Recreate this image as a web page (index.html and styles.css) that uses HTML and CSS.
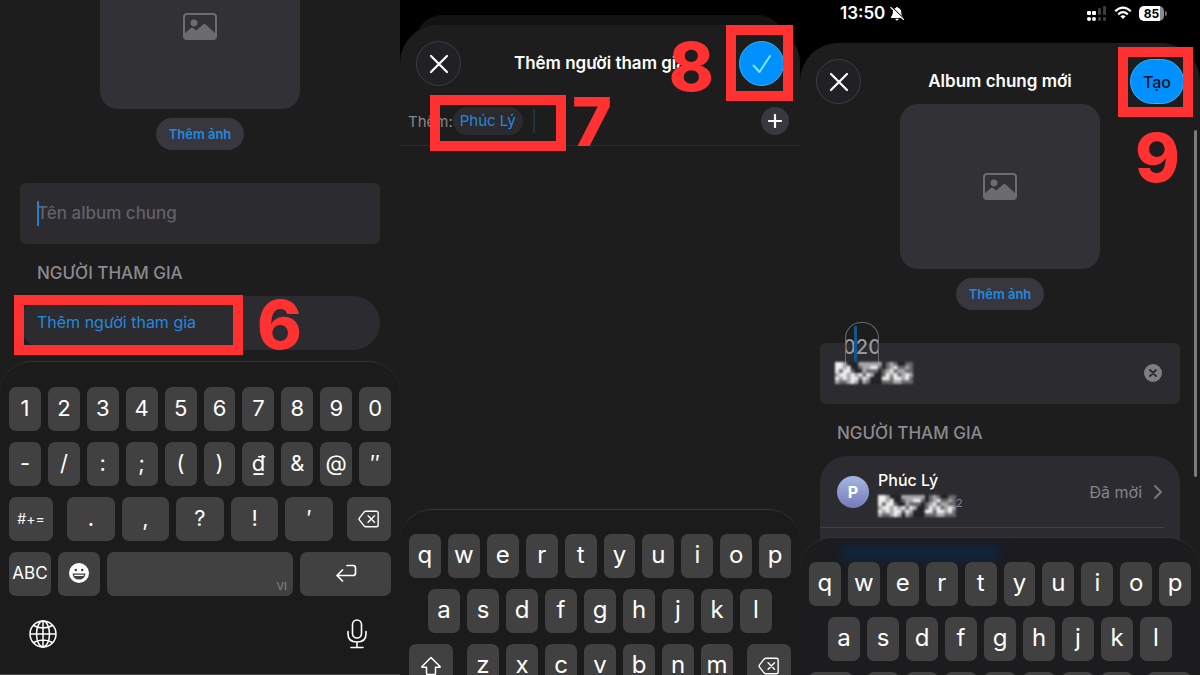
FILE: index.html
```html
<!DOCTYPE html>
<html lang="vi">

<head>
    <meta charset="UTF-8">
    <meta name="viewport" content="width=device-width, initial-scale=1.0">
    <title>Album chung mới</title>
    <link rel="stylesheet" href="styles.css">
</head>

<body>
    <!-- Shared icons -->
    <svg class="symbols" aria-hidden="true">
        <symbol id="icon-photo" viewBox="0 0 34 28">
            <rect x="1" y="1" width="32" height="25" rx="3" fill="none" stroke="currentColor" stroke-width="2" />
            <circle cx="11" cy="10" r="3.4" fill="currentColor" />
            <path d="M2 20l6-5q1-.8 2 0l3 2.6 7-6q1.300-1 2.600 0L32 20v4q0 2-2 2H4q-2 0-2-2z" fill="currentColor" />
        </symbol>
        <symbol id="icon-close" viewBox="0 0 20 20">
            <path d="M2 2l16 16M18 2L2 18" fill="none" stroke="currentColor" stroke-width="2.200" stroke-linecap="round" />
        </symbol>
        <symbol id="icon-delete" viewBox="0 0 24 20">
            <path d="M8.500 1.500H20q2 0 2 2v13q0 2-2 2H8.500q-1 0-1.700-.8L1.500 11q-.8-1 0-2l5.300-6.700q.7-.8 1.700-.8zM11 6.500l7 7M18 6.500l-7 7" fill="none" stroke="currentColor" stroke-width="1.500" stroke-linecap="round" stroke-linejoin="round" />
        </symbol>
        <symbol id="icon-shift" viewBox="0 0 22 20">
            <path d="M11 1.500L2 10.500q-.6.800.3.800H6.500V17q0 1.500 1.500 1.500h6q1.500 0 1.500-1.500v-5.700h4.200q.9 0 .3-.8z" fill="none" stroke="currentColor" stroke-width="1.500" stroke-linejoin="round" />
        </symbol>
        <!-- Pixelated number -->
        <symbol id="mosaic" viewBox="0 0 20 6" preserveAspectRatio="none">
            <rect width="20" height="6" fill="#68686b" />
            <g stroke-width="1" fill="none">
                <path stroke="#232325" d="M3 .5h3m6 0h1m3 0h2M4 1.500h2m6 0h1M5 2.500h2m4 0h1M10 3.500h2M9 4.500h3M6 5.500h1m2 0h3" />
                <path stroke="#a9a9ab" d="M2 .5h1m3 0h6m2 0h1M2 1.500h1m4 0h2m5 0h1m3 0h1M7 2.500h1m5 0h1m2 0h2M0 3.500h1m2 0h1m1 0h1m3 0h1m4 0h1m2 0h1m1 0h1M1 4.500h1m1 0h1m4 0h1m8 0h1M0 5.500h1m2 0h1m1 0h1m1 0h1m7 0h2" />
                <path stroke="#efefef" d="M0 .5h2M0 1.500h2m1 0h1m5 0h2m4 0h1M0 2.500h1m1 0h2m10 0h1M1 3.500h2m1 0h1m1 0h1m1 0h1m4 0h1m1 0h1m2 0h1M0 4.500h1m1 0h1m1 0h2m1 0h1m4 0h2m1 0h2m1 0h1M4 5.500h1" />
            </g>
        </symbol>
    </svg>

    <div class="steps">
        <!-- Step 6 -->
        <section class="screen screen-name">
            <div class="content">
                <div class="photo photo-cut"><svg class="photo-icon"><use href="#icon-photo" /></svg></div>
                <button class="pill">Thêm ảnh</button>
                <div class="field">
                    <input class="field-input" type="text" aria-label="Tên album chung" placeholder="Tên album chung">
                    <span class="caret"></span>
                </div>
                <h2 class="group-title">NGƯỜI THAM GIA</h2>
                <button class="add-row">Thêm người tham gia</button>
            </div>
            <div class="keyboard keyboard-full">
                <div class="keys digits">
                    <button>1</button><button>2</button><button>3</button><button>4</button><button>5</button><button>6</button><button>7</button><button>8</button><button>9</button><button>0</button>
                </div>
                <div class="keys digits">
                    <button>-</button><button>/</button><button>:</button><button>;</button><button>(</button><button>)</button><button>₫</button><button>&amp;</button><button>@</button><button>″</button>
                </div>
                <div class="keys digits">
                    <button class="side small">#+=</button><button>.</button><button>,</button><button>?</button><button>!</button><button>′</button>
                    <button class="side side-end" aria-label="Xóa"><svg class="key-icon"><use href="#icon-delete" /></svg></button>
                </div>
                <div class="keys keys-bottom">
                    <button class="abc">ABC</button>
                    <button aria-label="Emoji">
                        <svg class="emoji" viewBox="0 0 20 20">
                            <circle cx="10" cy="10" r="10" fill="#fff" />
                            <circle cx="6.800" cy="7" r="1.300" fill="#414141" />
                            <circle cx="13.200" cy="7" r="1.300" fill="#414141" />
                            <path d="M3.500 10.500h13q-.6 6-6.500 6t-6.500-6z" fill="#414141" />
                            <path d="M5 11.700h10q0 1.400-1 1.400H6q-1 0-1-1.400z" fill="#fff" />
                        </svg>
                    </button>
                    <button class="space">VI</button>
                    <button aria-label="Xuống dòng">
                        <svg class="return" viewBox="0 0 22 18">
                            <path d="M12 1.500h6q2.500 0 2.500 2.500v5q0 2.500-2.500 2.500H2M7.500 6L2 11.500 7.500 17" fill="none" stroke="#fff" stroke-width="1.700" stroke-linecap="round" stroke-linejoin="round" />
                        </svg>
                    </button>
                </div>
                <div class="keyboard-tools">
                    <button aria-label="Ngôn ngữ">
                        <svg class="globe" viewBox="0 0 28 28" fill="none" stroke="#fff" stroke-width="1.500">
                            <circle cx="14" cy="14" r="13" />
                            <ellipse cx="14" cy="14" rx="6.500" ry="13" />
                            <path d="M14 1v26M1 14h26M4.500 5.500q9.500 5 19 0M4.500 22.500q9.500-5 19 0" />
                        </svg>
                    </button>
                    <button aria-label="Đọc chính tả">
                        <svg class="mic" viewBox="0 0 20 30" fill="none" stroke="#fff" stroke-width="1.600" stroke-linecap="round">
                            <rect x="5.500" y="1" width="9" height="18" rx="4.500" />
                            <path d="M1 12.500v2.500q0 8 9 8t9-8v-2.500M10 23v5.500M4 28.500h12" />
                        </svg>
                    </button>
                </div>
            </div>
            <div class="mark mark-6"></div>
            <span class="step step-6">6</span>
        </section>

        <!-- Steps 7 and 8 -->
        <section class="screen screen-people">
            <div class="sheet">
                <header class="bar">
                    <button class="round" aria-label="Đóng"><svg class="close-icon"><use href="#icon-close" /></svg></button>
                    <h1>Thêm người tham gia</h1>
                    <button class="round done" aria-label="Xong">
                        <svg class="check" viewBox="0 0 20 20">
                            <path d="M1.500 11.500L7.500 18 18 2" fill="none" stroke="#7fe4ff" stroke-width="2" stroke-linecap="round" stroke-linejoin="round" />
                        </svg>
                    </button>
                </header>
                <div class="recipients">
                    <span>Thêm:</span>
                    <a class="chip" href="#">Phúc Lý</a>
                    <span class="caret-dim"></span>
                    <button class="plus" aria-label="Thêm liên hệ">
                        <svg viewBox="0 0 14 14"><path d="M7 1v12M1 7h12" stroke="#fff" stroke-width="2.200" stroke-linecap="round" /></svg>
                    </button>
                </div>
            </div>
            <div class="keyboard keyboard-people">
                <div class="keys">
                    <button>q</button><button>w</button><button>e</button><button>r</button><button>t</button><button>y</button><button>u</button><button>i</button><button>o</button><button>p</button>
                </div>
                <div class="keys keys-inset">
                    <button>a</button><button>s</button><button>d</button><button>f</button><button>g</button><button>h</button><button>j</button><button>k</button><button>l</button>
                </div>
                <div class="keys">
                    <button class="side" aria-label="Shift"><svg class="key-icon"><use href="#icon-shift" /></svg></button>
                    <button>z</button><button>x</button><button>c</button><button>v</button><button>b</button><button>n</button><button>m</button>
                    <button class="side side-end" aria-label="Xóa"><svg class="key-icon"><use href="#icon-delete" /></svg></button>
                </div>
            </div>
            <div class="mark mark-7"></div>
            <span class="step step-7">7</span>
            <div class="mark mark-8"></div>
            <span class="step step-8">8</span>
        </section>

        <!-- Step 9 -->
        <section class="screen screen-create">
            <div class="status">
                <span class="clock">13:50</span>
                <svg class="bell" viewBox="0 0 14 15">
                    <path d="M7 1q1 0 1.200 1 3 .8 3 4.500 0 2.500 1.800 4.500v1H1v-1q1.800-2 1.800-4.500 0-3.700 3-4.500Q6 1 7 1zM5.300 12.800h3.400Q8.500 14.500 7 14.500t-1.700-1.700z" fill="#fff" />
                    <path d="M1.500.9l12 11.200" stroke="#000" stroke-width="1.200" />
                    <path d="M.8 1.500l12.700 12" stroke="#fff" stroke-width="1.100" stroke-linecap="round" />
                </svg>
                <svg class="signal" viewBox="0 0 20 15">
                    <g fill="#fff">
                        <rect x="0" y="5" width="4" height="4" rx="1" /><rect x="5" y="5" width="4" height="4" rx="1" />
                        <rect x="0" y="11" width="4" height="4" rx="2" /><rect x="5" y="11" width="4" height="4" rx="2" />
                    </g>
                    <g fill="#3d3d3d">
                        <rect x="11" y="2" width="3" height="7" rx="1" /><rect x="16" y="0" width="3" height="9" rx="1" />
                        <rect x="11" y="11" width="3" height="4" rx="1" /><rect x="16" y="11" width="3" height="4" rx="1" />
                    </g>
                </svg>
                <svg class="wifi" viewBox="0 0 18 14">
                    <path d="M1.200 5.200Q9-1.900 16.800 5.200M4.200 8.300q4.800-4.200 9.600 0" fill="none" stroke="#fff" stroke-width="2.200" />
                    <path d="M6.300 10.300q2.700-2.200 5.400 0L9 13z" fill="#fff" />
                </svg>
                <span class="battery">85</span>
            </div>
            <div class="sheet sheet-create">
                <header class="bar">
                    <button class="round" aria-label="Đóng"><svg class="close-icon"><use href="#icon-close" /></svg></button>
                    <h1>Album chung mới</h1>
                    <button class="round create">Tạo</button>
                </header>
                <div class="content">
                    <div class="photo"><svg class="photo-icon"><use href="#icon-photo" /></svg></div>
                    <button class="pill">Thêm ảnh</button>
                    <div class="field">
                        <input class="field-input" type="text" aria-label="Tên album chung">
                        <svg class="clear" viewBox="0 0 18 18">
                            <circle cx="9" cy="9" r="9" fill="#7e7e83" />
                            <path d="M6 6l6 6M12 6l-6 6" stroke="#2c2b30" stroke-width="1.800" stroke-linecap="round" />
                        </svg>
                        <span class="loupe">020</span>
                        <svg class="mosaic field-mosaic"><use href="#mosaic" /></svg>
                    </div>
                    <h2 class="group-title">NGƯỜI THAM GIA</h2>
                    <div class="people">
                        <div class="person">
                            <span class="avatar">P</span>
                            <div class="person-name">
                                <strong>Phúc Lý</strong>
                                <span class="number"><svg class="mosaic"><use href="#mosaic" /></svg><small>2</small></span>
                            </div>
                            <span class="invited">Đã mời</span>
                            <svg class="chevron" viewBox="0 0 8 14"><path d="M1 1l6 6-6 6" fill="none" stroke="#77777c" stroke-width="2" stroke-linecap="round" stroke-linejoin="round" /></svg>
                        </div>
                    </div>
                </div>
            </div>
            <div class="keyboard keyboard-create">
                <div class="keys">
                    <button>q</button><button>w</button><button>e</button><button>r</button><button>t</button><button>y</button><button>u</button><button>i</button><button>o</button><button>p</button>
                </div>
                <div class="keys keys-inset">
                    <button>a</button><button>s</button><button>d</button><button>f</button><button>g</button><button>h</button><button>j</button><button>k</button><button>l</button>
                </div>
                <div class="keys">
                    <button class="side" aria-label="Shift"></button>
                    <button aria-label="z"></button><button aria-label="x"></button><button aria-label="c"></button><button aria-label="v"></button><button aria-label="b"></button><button aria-label="n"></button><button aria-label="m"></button>
                    <button class="side side-end" aria-label="Xóa"></button>
                </div>
            </div>
            <div class="scrollbar"></div>
            <div class="mark mark-9"></div>
            <span class="step step-9">9</span>
        </section>
    </div>
</body>

</html>
```

FILE: styles.css
```css
* {
    box-sizing: border-box;
}

body {
    margin: 0;
    background: #000;
    color: #fff;
    font-family: Inter, "Liberation Sans", sans-serif;
    font-size: 16px;
}

button {
    border: 0;
    padding: 0;
    background: none;
    color: inherit;
    font: inherit;
    cursor: pointer;
}

svg {
    display: block;
    flex: none;
}

h1,
h2 {
    margin: 0;
}

.symbols {
    display: none;
}

.steps {
    display: grid;
    grid-template-columns: repeat(3, 1fr);
    height: 100vh;
}

.screen {
    position: relative;
    display: flex;
    flex-direction: column;
    min-width: 0;
    overflow: hidden;
}

.screen-name {
    background: #1d1d1d;
    border-bottom: 1px solid #4a4a4a;
}

.content {
    flex: 1;
    display: flex;
    flex-direction: column;
    min-height: 0;
    padding: 0 20px;
}

/* Album cover and name */
.photo {
    flex: none;
    display: flex;
    align-items: center;
    justify-content: center;
    align-self: center;
    width: 200px;
    height: 165px;
    border-radius: 18px;
    background: #323136;
    color: #6c6b70;
}

.photo-cut {
    margin-top: -56px;
}

.photo-icon {
    width: 34px;
    height: 28px;
}

.pill {
    flex: none;
    align-self: center;
    width: 88px;
    height: 32px;
    margin: 9px 0 33px;
    border-radius: 16px;
    background: #38373d;
    color: #2389df;
    font-size: 13px;
    font-weight: 600;
}

.field {
    flex: none;
    position: relative;
    height: 61px;
}

.field-input {
    width: 100%;
    height: 100%;
    padding: 0 17px 2px;
    border: 0;
    border-radius: 6px;
    background: #2c2b30;
    color: #fff;
    font: 500 17px Inter, "Liberation Sans", sans-serif;
}

.field-input::placeholder {
    color: #626167;
    opacity: 1;
}

.caret {
    position: absolute;
    left: 17px;
    top: 18px;
    width: 2px;
    height: 25px;
    background: #1f80d4;
}

.group-title {
    margin: 18px 17px 12px;
    color: #8b8a90;
    font-size: 17px;
    font-weight: 500;
    line-height: 22px;
}

.add-row {
    flex: none;
    height: 54px;
    padding: 0 17px 2px;
    border-radius: 27px;
    background: #2c2b30;
    color: #2389df;
    text-align: left;
}

/* Sheets */
.sheet {
    position: relative;
    flex: 1;
    display: flex;
    flex-direction: column;
    min-height: 0;
    border-radius: 38px 38px 0 0;
    background: #1d1d1d;
}

.screen-people {
    padding-top: 25px;
}

.screen-people::before {
    content: "";
    position: absolute;
    top: 15px;
    left: 16px;
    right: 16px;
    height: 40px;
    border-radius: 26px 26px 0 0;
    background: #131313;
}

.bar {
    display: grid;
    grid-template-columns: 54px 1fr 54px;
    align-items: center;
    padding: 16px 16px 0;
}

.bar h1 {
    padding-bottom: 2px;
    font-size: 17px;
    font-weight: 600;
    text-align: center;
    white-space: nowrap;
}

.round {
    display: flex;
    align-items: center;
    justify-content: center;
    width: 45px;
    height: 45px;
    border: 1px solid #3e3d42;
    border-radius: 23px;
    background: #212024;
}

.close-icon {
    width: 20px;
    height: 20px;
}

.done {
    justify-self: end;
    border-color: #35b0ff;
    background: #0091ff;
}

.check {
    width: 20px;
    height: 20px;
}

.create {
    width: 54px;
    border-color: #35b0ff;
    background: #0091ff;
    color: #07101c;
    font-weight: 500;
}

.recipients {
    display: flex;
    align-items: center;
    height: 60px;
    padding: 11px 11px 0 8px;
    border-bottom: 1px solid #2b2b2b;
    color: #85848a;
    font-size: 15px;
}

.chip {
    margin-right: 10px;
    padding: 4px 7px;
    border-radius: 14px;
    background: #2b2a2f;
    color: #2389df;
    line-height: 20px;
    text-decoration: none;
}

.caret-dim {
    width: 2px;
    height: 24px;
    background: #1e3046;
}

.plus {
    display: flex;
    align-items: center;
    justify-content: center;
    width: 28px;
    height: 28px;
    margin-left: auto;
    border-radius: 14px;
    background: #39383e;
}

.plus svg {
    width: 14px;
    height: 14px;
}

/* Status bar */
.status {
    display: flex;
    align-items: center;
    height: 43px;
    padding: 0 34px 17px 40px;
}

.clock {
    font-size: 17px;
    font-weight: 600;
}

.bell {
    width: 14px;
    height: 15px;
    margin-left: 5px;
}

.signal {
    width: 20px;
    height: 15px;
    margin-left: auto;
}

.wifi {
    width: 18px;
    height: 14px;
    margin: 0 7px;
}

.battery {
    position: relative;
    width: 25px;
    height: 15px;
    border-radius: 5px;
    margin-right: 2px;
    background: linear-gradient(to right, #fff 85%, #8a8a8a 85%);
    color: #000;
    font-size: 12px;
    font-weight: 700;
    line-height: 15px;
    text-align: center;
}

.battery::after {
    content: "";
    position: absolute;
    right: -3px;
    top: 5px;
    width: 2px;
    height: 5px;
    border-radius: 0 2px 2px 0;
    background: #6a6a6a;
}

/* New album form */
.clear {
    position: absolute;
    right: 18px;
    top: 21px;
    width: 18px;
    height: 18px;
}

.loupe {
    position: absolute;
    left: 25px;
    top: -21px;
    width: 34px;
    height: 42px;
    display: flex;
    justify-content: center;
    overflow: hidden;
    border: 1px solid #6a6a6e;
    border-bottom: 0;
    border-radius: 16px 16px 0 0;
    color: #98979c;
    font-size: 20px;
    font-weight: 500;
    line-height: 48px;
}

.loupe::before {
    content: "";
    position: absolute;
    left: 8px;
    top: 3px;
    width: 3px;
    height: 40px;
    background: #17548a;
}

.mosaic {
    width: 78px;
    height: 22px;
    filter: blur(1px);
}

.field-mosaic {
    position: absolute;
    left: 15px;
    top: 19px;
}

.people {
    flex: none;
    height: 110px;
    border-radius: 27px 27px 0 0;
    background: #2c2b30;
}

.person {
    display: flex;
    align-items: center;
    height: 72px;
    margin-right: 16px;
    padding-left: 17px;
    border-bottom: 1px solid #404045;
}

.avatar {
    width: 32px;
    height: 32px;
    border-radius: 50%;
    background: linear-gradient(#a3b9df, #7779bb);
    font-weight: 700;
    line-height: 32px;
    text-align: center;
}

.person-name {
    flex: 1;
    margin-left: 9px;
    padding-top: 4px;
}

.person-name strong {
    display: block;
    font-weight: 500;
    line-height: 20px;
}

.number {
    display: flex;
    align-items: center;
    margin-top: 5px;
    color: #85848a;
}

.number small {
    margin-top: -6px;
    font-size: 11px;
}

.invited {
    color: #85848a;
}

.chevron {
    width: 8px;
    height: 14px;
    margin: 0 2px 0 12px;
}

.scrollbar {
    position: absolute;
    right: 3px;
    top: 130px;
    width: 3px;
    height: 347px;
    border-radius: 2px;
    background: #7b7b7b;
}

/* Keyboard */
.keyboard {
    position: relative;
    flex: none;
    display: flex;
    flex-direction: column;
    gap: 11px;
    padding: 24px 9px 0;
    border-top: 1px solid #353535;
    border-radius: 32px 32px 0 0;
    background: #1b1b1b;
}

.keyboard-full {
    height: 313px;
    padding-top: 25px;
}

.keyboard-people {
    height: 166px;
}

.screen-people .sheet,
.screen-create .sheet {
    margin-bottom: -32px;
}

.keyboard-create {
    height: 138px;
    background: #1c1b1e;
}

/* Row of the list that shows through the top of the keyboard */
.keyboard-create::before {
    content: "";
    position: absolute;
    left: 40px;
    top: 6px;
    width: 160px;
    height: 18px;
    background: #102439;
    filter: blur(4px);
}

.keys {
    position: relative;
    flex: none;
    display: flex;
    gap: 7px;
}

.keys-inset {
    padding: 0 19px;
}

.keys button {
    flex: 1;
    display: flex;
    align-items: center;
    justify-content: center;
    min-width: 0;
    height: 44px;
    padding-bottom: 2px;
    border-radius: 7px;
    background: #414141;
    font-size: 24px;
    line-height: 28px;
}

.digits button {
    padding-bottom: 3px;
    font-size: 22px;
}

.keys .side {
    flex: 0 0 44px;
    margin-right: 7px;
    padding: 0;
}

.keys .side-end {
    margin: 0 0 0 7px;
}

.keys .small {
    font-size: 14px;
}

.key-icon {
    width: 22px;
    height: 20px;
}

.keys-bottom {
    display: grid;
    grid-template-columns: 42px 42px 1fr 91px;
}

.keys .abc {
    font-size: 17px;
}

.keys .space {
    align-items: flex-end;
    justify-content: flex-end;
    padding: 0 6px 3px 0;
    color: #858585;
    font-size: 11px;
    line-height: 14px;
}

.emoji {
    width: 20px;
    height: 20px;
}

.return {
    width: 22px;
    height: 18px;
}

.keyboard-tools {
    display: flex;
    justify-content: space-between;
    padding: 12px 24px 0 20px;
}

.globe {
    width: 28px;
    height: 28px;
}

.mic {
    width: 20px;
    height: 30px;
}

/* Step marks drawn over the screens */
.mark {
    position: absolute;
    border: 10px solid #ff3131;
    pointer-events: none;
}

.mark-6 {
    left: 14px;
    top: 295px;
    width: 229px;
    height: 60px;
}

.mark-7 {
    left: 30px;
    top: 95px;
    width: 136px;
    height: 56px;
}

.mark-8 {
    right: 7px;
    top: 25px;
    width: 67px;
    height: 76px;
}

.mark-9 {
    right: 7px;
    top: 47px;
    width: 75px;
    height: 70px;
}

.step {
    position: absolute;
    color: #ff3131;
    font-size: 68px;
    font-weight: 800;
    line-height: 68px;
}

.step-6 {
    left: 257px;
    top: 290px;
}

.step-7 {
    left: 172px;
    top: 87px;
}

.step-8 {
    right: 86px;
    top: 32px;
}

.step-9 {
    right: 20px;
    top: 123px;
}
```
